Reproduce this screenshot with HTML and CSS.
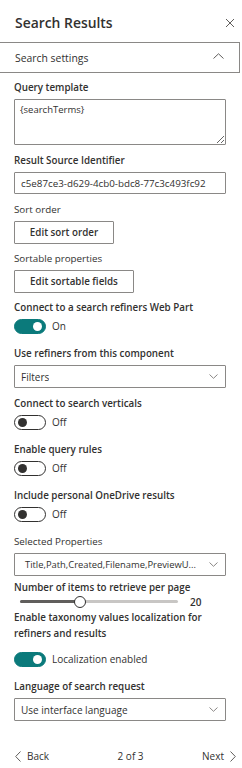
FILE: index.html
```html
<!DOCTYPE html>
<html lang="en">
<head>
<meta charset="utf-8">
<title>Search Results</title>
<link rel="stylesheet" href="styles.css">
</head>
<body>
<div class="panel">
  <div class="panel-head">
    <h1 class="panel-title">Search Results</h1>
    <svg class="close" width="10" height="10" viewBox="0 0 10 10"><path d="M1 1L9 9M9 1L1 9" stroke="#605e5c" stroke-width="1" fill="none"/></svg>
  </div>

  <div class="group-head">
    <span>Search settings</span>
    <svg width="11" height="6" viewBox="0 0 11 6"><path d="M0.5 5.5L5.5 0.8L10.5 5.5" stroke="#605e5c" stroke-width="1" fill="none"/></svg>
  </div>

  <div class="content">
    <div class="field">
      <div class="label strong">Query template</div>
      <textarea class="textarea">{searchTerms}</textarea>
    </div>

    <div class="field">
      <div class="label strong">Result Source Identifier</div>
      <div class="input">c5e87ce3-d629-4cb0-bdc8-77c3c493fc92</div>
    </div>

    <div class="field tight">
      <div class="label">Sort order</div>
      <button class="btn btn-sort">Edit sort order</button>
    </div>

    <div class="field tight">
      <div class="label">Sortable properties</div>
      <button class="btn btn-fields">Edit sortable fields</button>
    </div>

    <div class="field toggle-field">
      <div class="label strong">Connect to a search refiners Web Part</div>
      <div class="toggle-row"><span class="toggle on"><span class="thumb"></span></span><span class="toggle-text">On</span></div>
    </div>

    <div class="field">
      <div class="label strong">Use refiners from this component</div>
      <div class="dropdown"><span class="dd-text">Filters</span><svg class="dd-chev" width="9" height="5" viewBox="0 0 9 5"><path d="M0.5 0.5L4.5 4.3L8.5 0.5" stroke="#8a8886" stroke-width="1" fill="none"/></svg></div>
    </div>

    <div class="field toggle-field">
      <div class="label strong">Connect to search verticals</div>
      <div class="toggle-row"><span class="toggle"><span class="thumb"></span></span><span class="toggle-text">Off</span></div>
    </div>

    <div class="field toggle-field">
      <div class="label strong">Enable query rules</div>
      <div class="toggle-row"><span class="toggle"><span class="thumb"></span></span><span class="toggle-text">Off</span></div>
    </div>

    <div class="field toggle-field">
      <div class="label strong">Include personal OneDrive results</div>
      <div class="toggle-row"><span class="toggle"><span class="thumb"></span></span><span class="toggle-text">Off</span></div>
    </div>

    <div class="field small-gap">
      <div class="label">Selected Properties</div>
      <div class="dropdown"><span class="dd-text props">Title,Path,Created,Filename,PreviewU...</span><svg class="dd-chev" width="9" height="5" viewBox="0 0 9 5"><path d="M0.5 0.5L4.5 4.3L8.5 0.5" stroke="#8a8886" stroke-width="1" fill="none"/></svg></div>
    </div>

    <div class="field slider-field">
      <div class="label strong">Number of items to retrieve per page</div>
      <div class="slider-row">
        <div class="slider">
          <div class="track"><div class="track-fill" style="width: 38%"></div></div>
          <div class="slider-thumb" style="left: 38%"></div>
        </div>
        <span class="slider-value">20</span>
      </div>
    </div>

    <div class="field toggle-field">
      <div class="label strong">Enable taxonomy values localization for refiners and results</div>
      <div class="toggle-row spaced"><span class="toggle on"><span class="thumb"></span></span><span class="toggle-text">Localization enabled</span></div>
    </div>

    <div class="field">
      <div class="label strong">Language of search request</div>
      <div class="dropdown"><span class="dd-text">Use interface language</span><svg class="dd-chev" width="9" height="5" viewBox="0 0 9 5"><path d="M0.5 0.5L4.5 4.3L8.5 0.5" stroke="#8a8886" stroke-width="1" fill="none"/></svg></div>
    </div>
  </div>

  <div class="footer">
    <span class="nav"><svg width="6" height="11" viewBox="0 0 6 11"><path d="M5.5 0.5L0.7 5.5L5.5 10.5" stroke="#605e5c" stroke-width="1" fill="none"/></svg><span>Back</span></span>
    <span class="page">2 of 3</span>
    <span class="nav"><span>Next</span><svg width="6" height="11" viewBox="0 0 6 11"><path d="M0.5 0.5L5.3 5.5L0.5 10.5" stroke="#605e5c" stroke-width="1" fill="none"/></svg></span>
  </div>
</div>
</body>
</html>
```

FILE: styles.css
```css
* { box-sizing: border-box; }
html, body { margin: 0; padding: 0; background: #ffffff; }
body {
  font-family: "Open Sans", "Noto Sans", sans-serif;
  font-size: 10px;
  color: #323130;
}
.panel { width: 242px; height: 768px; display: flex; flex-direction: column; }
.panel-head {
  display: flex;
  justify-content: space-between;
  align-items: flex-start;
  padding: 12px 7px 0 15px;
  height: 42px;
}
.panel-title {
  margin: 0;
  font-size: 13.9px;
  font-weight: 600;
  line-height: 22px;
  color: #323130;
}
.close { margin-top: 6px; }
.group-head {
  height: 31px;
  margin-right: 2px;
  border: 1px solid #8a8886;
  border-left: none;
  display: flex;
  align-items: center;
  justify-content: space-between;
  padding: 0 15px 0 15px;
  font-size: 10.4px;
  color: #323130;
}
.group-head svg { margin-top: -3px; }
.content { padding: 7px 16px 0 14px; }
.field { margin-bottom: 8px; }
.field.tight { margin-bottom: 7px; }
.field.toggle-field { margin-bottom: 10px; }
.field.small-gap { margin-bottom: 4px; }
.field.slider-field { margin-bottom: 2px; }
.label {
  line-height: 16px;
  margin-bottom: 3px;
  font-size: 9.8px;
}
.label.strong { font-weight: 600; }
.textarea {
  display: block;
  width: 100%;
  height: 46px;
  border: 1px solid #8a8886;
  border-radius: 1px;
  padding: 3px 5px;
  font-family: inherit;
  font-size: 9.5px;
  color: #323130;
  resize: both;
  margin: 0;
}
.input {
  height: 22px;
  border: 1px solid #8a8886;
  border-radius: 1px;
  padding: 0 6px;
  display: flex;
  align-items: center;
  font-size: 9.8px;
  white-space: nowrap;
  overflow: hidden;
}
.btn {
  display: block;
  height: 23px;
  border: 1px solid #8a8886;
  border-radius: 1px;
  background: #fff;
  font-family: inherit;
  font-size: 9.8px;
  font-weight: 600;
  color: #323130;
  padding: 0;
  margin: 0;
}
.btn-sort { width: 100px; }
.btn-fields { width: 120px; }
.toggle-field .label { margin-bottom: 0; }
.toggle-row {
  display: flex;
  align-items: center;
  height: 20px;
  gap: 6px;
}
.toggle-row.spaced { margin-top: 7px; }
.toggle {
  width: 32px;
  height: 15px;
  border-radius: 8px;
  border: 1px solid #323130;
  background: #fff;
  display: flex;
  align-items: center;
  padding: 0 3px;
  flex: none;
}
.toggle .thumb {
  width: 9px;
  height: 9px;
  border-radius: 50%;
  background: #323130;
}
.toggle.on {
  background: #0b7a7b;
  border-color: #0b7a7b;
  justify-content: flex-end;
}
.toggle.on .thumb { background: #fff; }
.toggle-text { font-size: 10px; }
.dropdown {
  height: 23px;
  border: 1px solid #8a8886;
  border-radius: 1px;
  display: flex;
  align-items: center;
  justify-content: space-between;
  padding: 0 7px 0 6px;
}
.dd-text { white-space: nowrap; overflow: hidden; font-size: 10px; }
.dd-text.props { padding-left: 4px; font-size: 9.4px; }
.dd-chev { flex: none; margin-left: 4px; }
.slider-field .label { margin-bottom: 0; }
.slider-row {
  display: flex;
  align-items: center;
  height: 13px;
  margin-top: -1px;
  padding-left: 6px;
}
.slider {
  position: relative;
  flex: none;
  width: 158px;
  height: 14px;
  display: flex;
  align-items: center;
}
.track {
  width: 100%;
  height: 3px;
  border-radius: 2px;
  background: #c8c6c4;
  overflow: hidden;
}
.track-fill { height: 100%; background: #605e5c; }
.slider-thumb {
  position: absolute;
  top: 1px;
  width: 12px;
  height: 12px;
  margin-left: -6px;
  border: 1.5px solid #323130;
  border-radius: 50%;
  background: #fff;
}
.slider-value { margin-left: 12px; font-size: 10px; font-weight: 600; }
.footer {
  margin-top: auto;
  height: 22px;
  margin-bottom: 1px;
  display: flex;
  align-items: center;
  justify-content: space-between;
  padding: 0 6px 0 15px;
  font-size: 10px;
}
.nav { display: flex; align-items: center; gap: 6px; }
.page { margin-left: 10px; }
```
